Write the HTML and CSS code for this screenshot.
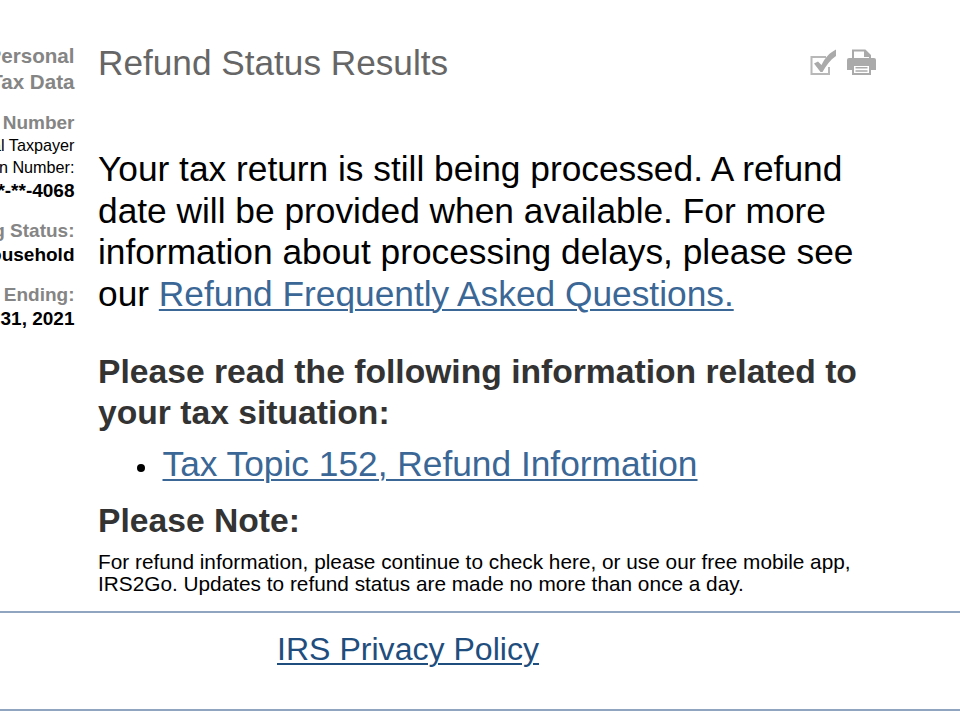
FILE: index.html
```html
<!DOCTYPE html>
<html lang="en">
  <head>
    <meta charset="UTF-8">
    <meta name="viewport" content="width=device-width, initial-scale=1">
    <title>Refund Status Results</title>
    <link rel="stylesheet" href="styles.css">
  </head>
  <body>
    <div class="page">
      <div class="sidebar">
        <div class="title">Your Personal<br>Tax Data</div>
        <div class="label ssn">Social Security Number</div>
        <div class="hint">or Individual Taxpayer<br>Identification Number:</div>
        <div class="value number">***-**-4068</div>
        <div class="label">Filing Status:</div>
        <div class="value">Head of Household</div>
        <div class="label">Tax Period Ending:</div>
        <div class="value">December 31, 2021</div>
      </div>
      <div class="content">
        <div class="header">
          <h1>Refund Status Results</h1>
          <div class="tools">
            <svg width="27" height="27" viewBox="0 0 27 27">
              <path d="M16 8H1.5V25H19V18" fill="none" stroke="#b8b8b8" stroke-width="2"/>
              <path d="M4 14.5L8 12.5L11.5 16C15 9 19 4 26 0.5V7C20 11 16 17 12.5 23H10.5Z" fill="#aaa"/>
            </svg>
            <svg width="29" height="27" viewBox="0 0 29 27">
              <path d="M6 10V1.5H18L23 6.5V10" fill="#fff" stroke="#aaa" stroke-width="2"/>
              <path d="M17 1V8H24Z" fill="#aaa"/>
              <path d="M0 11Q0 9 2 9H27Q29 9 29 11V21H0Z" fill="#aaa"/>
              <path d="M6 16H23V25H6Z" fill="#fff" stroke="#aaa" stroke-width="2"/>
              <path d="M8.5 18.7H20.5M8.5 22H20.5" stroke="#aaa" stroke-width="1.6"/>
            </svg>
          </div>
        </div>
        <p class="status">Your tax return is still being processed. A refund<br>date will be provided when available. For more<br>information about processing delays, please see<br>our <a href="#">Refund Frequently Asked Questions.</a></p>
        <h2>Please read the following information related to<br>your tax situation:</h2>
        <ul>
          <li><a href="#">Tax Topic 152, Refund Information</a></li>
        </ul>
        <h2>Please Note:</h2>
        <p class="note">For refund information, please continue to check here, or use our free mobile app,<br>IRS2Go. Updates to refund status are made no more than once a day.</p>
      </div>
    </div>
    <div class="footer">
      <a href="#">IRS Privacy Policy</a>
    </div>
  </body>
</html>
```

FILE: styles.css
```css
body {
  margin: 0;
  height: 711px;
  overflow: hidden;
  background: #fff;
  color: #000;
  font-family: "Liberation Sans", Arial, sans-serif;
}

a {
  color: #3b6796;
  text-decoration-thickness: 2px;
  text-underline-offset: 3px;
}

h1, h2, p, ul {
  margin: 0;
}

.page {
  display: flex;
  height: 611px;
}

.sidebar {
  display: flex;
  flex-direction: column;
  align-items: flex-end;
  width: 74.5px;
  margin-right: 23.5px;
  padding-top: 43px;
  flex-shrink: 0;
  text-align: right;
  white-space: nowrap;
}

.title {
  color: #858585;
  font-size: 20.6px;
  font-weight: bold;
  line-height: 26px;
}

.label {
  margin-top: 16px;
  color: #858585;
  font-size: 19px;
  font-weight: bold;
  line-height: 24px;
}

.label.ssn {
  line-height: 23px;
}

.hint {
  font-size: 16.2px;
  line-height: 22px;
}

.value {
  font-size: 19px;
  font-weight: bold;
  line-height: 24px;
}

.value.number {
  margin-top: 1px;
}

.content {
  width: 780px;
  padding-top: 42px;
  white-space: nowrap;
}

.header {
  display: flex;
  justify-content: space-between;
  height: 106px;
}

h1 {
  color: #666;
  font-size: 35.2px;
  font-weight: normal;
  line-height: 42px;
}

.tools {
  display: flex;
  gap: 10px;
  margin: 7px 2px 0 0;
}

.status {
  font-size: 35.3px;
  line-height: 41.7px;
}

h2 {
  color: #333;
  font-size: 33.65px;
  line-height: 41px;
}

.status + h2 {
  margin-top: 36px;
}

ul {
  margin: 10px 0 15px;
  padding-left: 64.5px;
  list-style: none;
}

li {
  position: relative;
  font-size: 35.3px;
  line-height: 42px;
}

li::before {
  content: "";
  position: absolute;
  left: -25.5px;
  top: 21.5px;
  width: 8px;
  height: 8px;
  border-radius: 50%;
  background: #000;
}

.note {
  margin-top: 10px;
  font-size: 20.8px;
  line-height: 22px;
}

.footer {
  height: 96px;
  border-top: 2px solid #8fa5c0;
  border-bottom: 2px solid #8fa5c0;
  line-height: 72px;
}

.footer a {
  margin-left: 277px;
  color: #1f4e7e;
  font-size: 32.1px;
}
```
